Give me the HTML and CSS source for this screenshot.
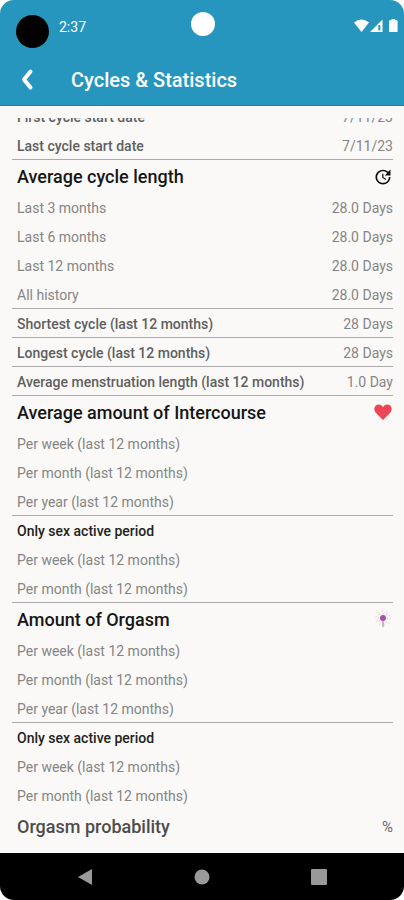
FILE: index.html
```
<!DOCTYPE html>
<html lang="en">
<head>
<meta charset="utf-8">
<meta name="viewport" content="width=device-width, initial-scale=1">
<title>Cycles &amp; Statistics</title>
<link rel="stylesheet" href="styles.css">
</head>
<body>
<div class="phone">
  <header class="top">
    <div class="status">
      <div class="status-left"><span class="badge"></span><span class="time">2:37</span></div>
      <span class="camera"></span>
      <div class="status-right">
        <svg width="46" height="16" viewBox="0 0 46 16" fill="#fff" aria-hidden="true">
          <path d="M1 4.500Q8.500-1.500 16 4.500L8.500 14Z"/>
          <path fill-rule="evenodd" d="M29.500 1.500V14H17Zm-2.200 5.500h-2v5.500h2Z"/>
          <path d="M36 3q0-.8.8-.8h1.700V1h3.600v1.200h1.700q.8 0 .8.800v10.200q0 .8-.8.800h-7q-.8 0-.8-.8Z"/>
        </svg>
      </div>
    </div>
    <div class="bar">
      <button class="back" type="button" aria-label="Back">
        <svg width="14" height="24" viewBox="0 0 14 24" fill="none" stroke="#fff" stroke-width="4" stroke-linecap="round" stroke-linejoin="round" aria-hidden="true"><path d="M9.500 3.500L3 11.500L9.500 19.500"/></svg>
      </button>
      <h1>Cycles &amp; Statistics</h1>
    </div>
  </header>
  <main class="scroll">
    <div class="list">
      <div class="row bold"><span>First cycle start date</span><span class="value">7/11/23</span></div>
      <div class="row bold line"><span>Last cycle start date</span><span class="value">7/11/23</span></div>

      <div class="head"><h2>Average cycle length</h2>
        <svg width="20" height="20" viewBox="0 0 24 24" fill="#111" aria-hidden="true"><path d="M21 10.120h-6.780l2.740-2.820c-2.730-2.700-7.150-2.800-9.880-.1-2.730 2.710-2.730 7.080 0 9.790s7.150 2.710 9.880 0C18.320 15.650 19 14.080 19 12.100h2c0 1.980-.88 4.550-2.640 6.290-3.510 3.480-9.210 3.480-12.720 0-3.500-3.470-3.530-9.110-.02-12.580s9.140-3.470 12.650 0L21 3v7.120zM12.500 8v4.250l3.500 2.080-.72 1.210L11 13V8h1.500z"/></svg>
      </div>
      <div class="row"><span>Last 3 months</span><span class="value">28.0 Days</span></div>
      <div class="row"><span>Last 6 months</span><span class="value">28.0 Days</span></div>
      <div class="row"><span>Last 12 months</span><span class="value">28.0 Days</span></div>
      <div class="row line"><span>All history</span><span class="value">28.0 Days</span></div>
      <div class="row bold line"><span>Shortest cycle (last 12 months)</span><span class="value">28 Days</span></div>
      <div class="row bold line"><span>Longest cycle (last 12 months)</span><span class="value">28 Days</span></div>
      <div class="row bold line"><span>Average menstruation length (last 12 months)</span><span class="value">1.0 Day</span></div>

      <div class="head"><h2>Average amount of Intercourse</h2>
        <svg width="20" height="20" viewBox="0 0 20 20" fill="#ef4656" aria-hidden="true"><path d="M10 17L3 10C-.5 6.300 2 1.500 5.700 1.500C7.700 1.500 9.200 2.500 10 4.200C10.800 2.500 12.300 1.500 14.300 1.500C18 1.500 20.500 6.300 17 10Z"/></svg>
      </div>
      <div class="row"><span>Per week (last 12 months)</span></div>
      <div class="row"><span>Per month (last 12 months)</span></div>
      <div class="row line"><span>Per year (last 12 months)</span></div>
      <h3 class="row">Only sex active period</h3>
      <div class="row"><span>Per week (last 12 months)</span></div>
      <div class="row line"><span>Per month (last 12 months)</span></div>

      <div class="head"><h2>Amount of Orgasm</h2>
        <svg width="20" height="20" viewBox="0 0 20 20" fill="none" aria-hidden="true">
          <circle cx="10" cy="8" r="7" stroke="#f3dccf" stroke-width="1.500" stroke-dasharray="1.500 3"/>
          <circle cx="10" cy="8" r="4.700" stroke="#e9d5ec" stroke-width="1.500" stroke-dasharray="1.500 2"/>
          <path d="M10 9v8" stroke="#b9a4bb" stroke-width="1.500"/>
          <circle cx="10" cy="8" r="3" fill="#a653a0"/>
        </svg>
      </div>
      <div class="row"><span>Per week (last 12 months)</span></div>
      <div class="row"><span>Per month (last 12 months)</span></div>
      <div class="row line"><span>Per year (last 12 months)</span></div>
      <h3 class="row">Only sex active period</h3>
      <div class="row"><span>Per week (last 12 months)</span></div>
      <div class="row"><span>Per month (last 12 months)</span></div>

      <div class="head soft"><h2>Orgasm probability</h2><span class="percent">%</span></div>
    </div>
  </main>
  <nav class="nav">
    <button type="button" aria-label="Back"><svg width="16" height="16" viewBox="0 0 16 16" fill="#999" aria-hidden="true"><path d="M15 0V16L1 8Z"/></svg></button>
    <button type="button" aria-label="Home"><svg width="16" height="16" viewBox="0 0 16 16" fill="#999" aria-hidden="true"><circle cx="8" cy="8" r="7.500"/></svg></button>
    <button type="button" aria-label="Recent apps"><svg width="16" height="16" viewBox="0 0 16 16" fill="#999" aria-hidden="true"><rect width="16" height="16" rx="1"/></svg></button>
  </nav>
</div>
</body>
</html>
```
FILE: styles.css
```
* { box-sizing: border-box; }
body {
  margin: 0;
  background: #fff;
  font-family: Roboto, "Liberation Sans", sans-serif;
}
h1, h2, h3 { margin: 0; font-weight: 500; }
button { border: 0; padding: 0; background: none; display: flex; cursor: pointer; }
svg { display: block; flex: none; }

.phone {
  height: 100vh;
  display: flex;
  flex-direction: column;
  overflow: hidden;
  border-radius: 14px;
  background: #faf9f7;
}

.top {
  flex: none;
  background: #2696bf;
  border-bottom: 1px solid #1a85b0;
  color: #fff;
}
.status {
  display: grid;
  grid-template-columns: 1fr auto 1fr;
  padding: 12px 5px 0 6px;
}
.status-left { display: flex; gap: 10px; padding-left: 10px; }
.badge { width: 33px; height: 33px; margin-top: 3px; border-radius: 50%; background: #000; }
.time { font-size: 14px; line-height: 30px; }
.camera { width: 24px; height: 24px; border-radius: 50%; background: #fff; }
.status-right { display: flex; justify-content: flex-end; padding-top: 6px; }
.bar {
  display: flex;
  align-items: center;
  gap: 36px;
  height: 57px;
  padding: 6px 21px 0;
}
.bar h1 { font-size: 20px; line-height: 28px; }

.scroll { flex: 1; min-height: 0; margin-top: 12px; overflow: hidden; }
.list { margin: -16px 11px 0 12px; }
.row {
  display: flex;
  justify-content: space-between;
  height: 29px;
  padding-left: 5px;
  font-size: 14px;
  line-height: 30px;
  color: #858585;
  white-space: nowrap;
}
.bold { color: #5f5f5f; font-weight: 500; }
.value { color: #858585; font-weight: 400; }
.line { border-bottom: 1px solid #ababab; }
h3.row { color: #222; font-weight: 500; }
.head {
  display: flex;
  justify-content: space-between;
  align-items: center;
  height: 33px;
  padding-left: 5px;
}
.head h2 { font-size: 18px; line-height: 24px; color: #161616; }
.head.soft h2 { color: #4c4c4c; }
.percent { font-size: 15px; color: #666; }

.nav {
  flex: none;
  height: 47px;
  padding: 0 27px 0 26px;
  display: grid;
  grid-template-columns: repeat(3, 1fr);
  align-items: center;
  justify-items: center;
  background: #000;
}
```
